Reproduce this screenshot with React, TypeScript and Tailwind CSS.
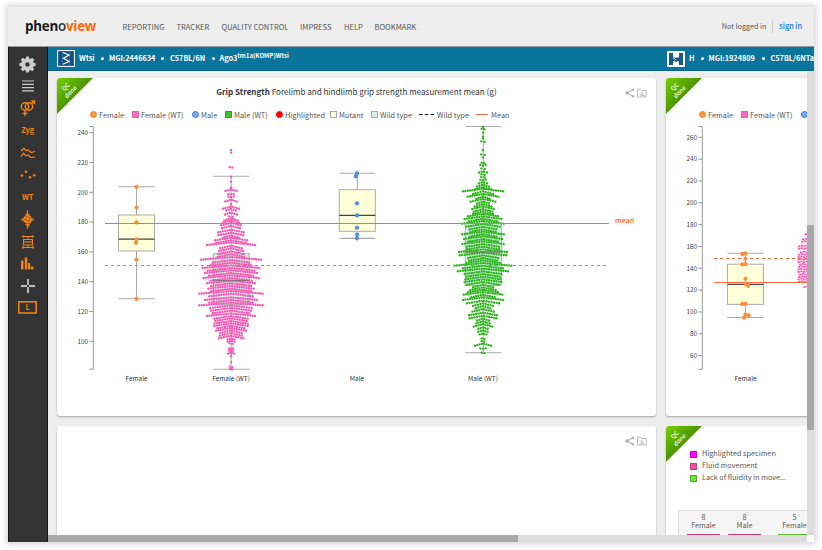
import type { ReactNode } from "react";

const SANS = "font-['Noto_Sans_CJK_SC',sans-serif]";

type Row = [number, number];

// Beeswarm rows: offset down the plot and half width, both in thirds of a pixel.
const femaleRows: Row[] = [
  [90, 0], [98, 0], [141, 4], [170, 0], [185, 0], [203, 0], [209, 17], [222, 8], [230, 8], [240, 17], [252, 0], [260, 24],
  [268, 14], [279, 18], [289, 5], [296, 20], [302, 24], [309, 29], [318, 27], [330, 38], [339, 37], [347, 25], [354, 48],
  [362, 44], [368, 72], [378, 33], [386, 36], [395, 38], [404, 40], [412, 90], [421, 55], [429, 60], [437, 85], [445, 70],
  [452, 78], [460, 66], [467, 83], [475, 62], [483, 72], [491, 60], [499, 68], [507, 60], [514, 95], [522, 65], [533, 78],
  [541, 65], [549, 95], [557, 62], [565, 60], [573, 55], [581, 72], [589, 50], [596, 47], [604, 50], [611, 50], [618, 40],
  [625, 45], [632, 32], [640, 33], [648, 36], [656, 10], [663, 10], [670, 4], [685, 6], [692, 6], [699, 9], [708, 0],
  [726, 0], [740, 4], [747, 3],
];
const maleRows: Row[] = [
  [20, 0], [26, 4], [38, 0], [50, 0], [55, 0], [64, 5], [90, 0], [103, 5], [112, 0], [128, 4], [135, 8], [145, 5], [155, 12],
  [163, 5], [171, 5], [179, 8], [187, 12], [195, 18], [202, 25], [207, 60], [215, 30], [223, 46], [231, 20], [238, 37],
  [246, 18], [253, 25], [260, 32], [268, 28], [275, 30], [282, 45], [290, 55], [297, 42], [304, 62], [313, 50], [321, 40],
  [329, 38], [336, 62], [343, 40], [350, 57], [358, 45], [365, 62], [373, 48], [381, 48], [389, 72], [399, 70],
  [407, 45], [415, 42], [422, 50], [430, 85], [438, 60], [447, 75], [455, 55], [463, 50], [471, 52], [479, 55], [487, 48],
  [495, 30], [503, 38], [510, 45], [517, 58], [525, 35], [533, 60], [543, 48], [551, 30], [559, 22], [568, 32], [579, 42],
  [588, 40], [597, 18], [605, 20], [613, 28], [623, 14], [632, 14], [641, 10], [655, 4], [663, 4], [671, 24], [685, 8],
  [698, 4],
];

function Swarm({ rows, cx, color }: { rows: Row[]; cx: number; color: string }) {
  const dots: ReactNode[] = [];
  rows.forEach(([zy, zw], r) => {
    const w = zw / 3;
    const step = 2.4;
    const n = zw === 0 ? 1 : Math.max(2, Math.round((2 * w) / step) + 1);
    for (let i = 0; i < n; i++) {
      const x = n === 1 ? 0 : -w + (2 * w * i) / (n - 1);
      const lift = n < 4 ? 0.5 * (i % 2) : (Math.abs(x) / Math.max(w, 1)) * Math.min(2.6, w * 0.3) - 0.3;
      dots.push(<circle key={`${r}-${i}`} cx={cx + x} cy={120 + zy / 3 + lift} r="1.2" fill={color} />);
    }
  });
  return <g>{dots}</g>;
}

function Box({ x, top, q3, med, q1, low, wt = false }: { x: number; top: number; q3: number; med: number; q1: number; low: number; wt?: boolean }) {
  return (
    <g stroke="#aaaaaa" strokeWidth="1">
      <path d={`M${x} ${top}V${q3}M${x} ${q1}V${low}`} fill="none" />
      <path d={`M${x - 18} ${top}h36M${x - 18} ${low}h36`} fill="none" strokeWidth="1.1" />
      <rect x={x - 18} y={q3} width="36" height={q1 - q3} fill={wt ? "#d5f5ea" : "#ffffda"} />
      <path d={`M${x - 18} ${med}h36`} stroke={wt ? "#777" : "#444"} strokeWidth="1.3" />
    </g>
  );
}

function Axis({ x, first, step, labels }: { x: number; first: number; step: number; labels: number[] }) {
  return (
    <g>
      <path d={`M${x - 4} 126.5H${x}V369.2H${x - 4}`} fill="none" stroke="#999" />
      {labels.map((l, i) => (
        <g key={l}>
          <path d={`M${x - 4} ${first + i * step}h4`} stroke="#999" />
          <text x={x - 5.3} y={first + i * step + 2.3} textAnchor="end" fontSize="6.3" fill="#444">{l}</text>
        </g>
      ))}
    </g>
  );
}

function Label({ x, children }: { x: number; children: ReactNode }) {
  return <text x={x} y="381.4" textAnchor="middle" fontSize="6.5" fill="#333">{children}</text>;
}

function Points({ at, blue = false }: { at: Row[]; blue?: boolean }) {
  return (
    <g fill={blue ? "#5b9bf0" : "#ff9632"} stroke={blue ? "#3b77dd" : "#f97c35"} strokeWidth="0.8">
      {at.map(([x, y], i) => <circle key={i} cx={x} cy={y} r="1.7" />)}
    </g>
  );
}

function LegendItem({ kind, color = "", border = "", w, children }: { kind: "dot" | "square" | "dash" | "line"; color?: string; border?: string; w: string; children: ReactNode }) {
  return (
    <div className={`flex shrink-0 items-center whitespace-nowrap ${w}`}>
      {kind === "dot" && <span className={`mr-[2px] size-[7px] rounded-full border ${color} ${border}`} />}
      {kind === "square" && <span className={`mr-[2px] size-[7px] border ${color} ${border}`} />}
      {kind === "dash" && (
        <svg className="mr-[3px]" width="15" height="3"><path d="M0 1.5h15" stroke="#000" strokeWidth="1.2" strokeDasharray="3.6 2.2" /></svg>
      )}
      {kind === "line" && <span className="mr-[3px] h-px w-[12px] bg-[#ff7040]" />}
      {children}
    </div>
  );
}

function CardIcons() {
  return (
    <svg width="22" height="10" viewBox="0 0 22 10" className="absolute top-[10px] right-[9px]" fill="none" stroke="#b4b4b4">
      <path d="M8 1.7L2 5l6 3.3" strokeWidth="1.1" />
      <circle cx="8" cy="1.8" r="1.2" fill="#b4b4b4" stroke="none" />
      <circle cx="2" cy="5" r="1.7" fill="#b4b4b4" stroke="none" />
      <circle cx="8" cy="8.2" r="1.2" fill="#b4b4b4" stroke="none" />
      <path d="M12.5 9V1.2h3.2l.8 1.3h4.7V9zM14.7 7.7h4.6M17 3.6v3M15.7 5.4L17 6.8l1.3-1.4" strokeWidth=".9" />
    </svg>
  );
}

function QcRibbon() {
  return (
    <div className="absolute top-0 left-0 size-[36px] overflow-hidden rounded-tl-[3px] bg-linear-to-br from-[#75d000] to-[#438b00] to-60% [clip-path:polygon(0_0,100%_0,0_100%)]">
      <div className="absolute top-[4px] left-[-1px] w-[24px] rotate-[-45deg] text-center text-[6px] leading-[7px] font-medium text-white">
        <div>QC</div>
        <div>done</div>
      </div>
    </div>
  );
}

function Card({ className, children }: { className: string; children?: ReactNode }) {
  return <section className={`relative shrink-0 overflow-hidden rounded-[3px] bg-white shadow-[0_1px_2px_rgba(0,0,0,0.32)] ${className}`}>{children}</section>;
}

function Bullet() {
  return <span className="size-[3px] shrink-0 rounded-full bg-white" />;
}

function Gear() {
  return (
    <svg width="17" height="17" viewBox="-8.5 -8.5 17 17">
      {[0, 45, 90, 135, 180, 225, 270, 315].map((a) => (
        <path key={a} d="M-2 -5L-1.4 -8.1H1.4L2 -5z" fill="#ccc" transform={`rotate(${a})`} />
      ))}
      <circle r="4.2" fill="none" stroke="#ccc" strokeWidth="4" />
    </svg>
  );
}

function SideIcons() {
  const o = "#f78410";
  const cell = "flex h-[22.2px] shrink-0 items-center justify-center";
  return (
    <>
      <div className={cell}><Gear /></div>
      <div className={cell}><svg width="12" height="12"><path d="M0 1h12M0 4.3h12M0 7.6h12M0 10.9h12" stroke="#ccc" strokeWidth="1.2" /></svg></div>
      <div className={cell}>
        <svg width="16" height="17" viewBox="0 0 16 17" fill="none" stroke={o} strokeWidth="1.4">
          <circle cx="5" cy="6.5" r="3.7" /><circle cx="9" cy="6.5" r="3.7" />
          <path d="M5 10.2V16M2.5 13.4h5M11.7 3.8L14.5 1M11.3 1h3.3v3.3" />
        </svg>
      </div>
      <div className={`${cell} pb-[2px] text-[7.4px] font-bold text-[#f78410]`}>Zyg</div>
      <div className={cell}>
        <svg width="16" height="12" viewBox="0 0 16 12" fill="none" stroke={o} strokeWidth="1.2">
          <path d="M1 4L4 1.2L6 3.5L8 3L11 5.5L15 4.5M1 9.5L3.5 6.2L6 8.7L8 8L11 10.5L15 10" />
        </svg>
      </div>
      <div className={cell}>
        <svg width="16" height="10" fill={o}><circle cx="2" cy="5.5" r="1.3" /><circle cx="6" cy="1.7" r="1.3" /><circle cx="10" cy="7.3" r="1.3" /><circle cx="14.2" cy="5.3" r="1.3" /></svg>
      </div>
      <div className={`${cell} pb-[2px] text-[7.6px] font-bold text-[#f78410]`}>WT</div>
      <div className={cell}>
        <svg width="13" height="19" viewBox="-6.5 -9.5 13 19" stroke={o} strokeWidth="1.3">
          <path d="M-5.6 -.8V1M-4.2 -1.7V2M-2.8 -3.2V3.2M-1.4 -6V6M0 -9V9.2M1.4 -5.5V7M2.8 -3.8V4M4.2 -1.8V2M5.6 -.8V1" strokeDasharray="3 .3" />
        </svg>
      </div>
      <div className={cell}>
        <svg width="12" height="14" viewBox="0 0 12 14" fill="none" stroke={o} strokeWidth="1">
          <path d="M.5 1.5h11M.5 12.5h11M6 1.5v2M6 10.5v2M1 0v3M11 0v3M1 11v3M11 11v3M2 7h8" /><rect x="1.5" y="4.5" width="9" height="5.5" />
        </svg>
      </div>
      <div className={cell}>
        <svg width="13" height="13" fill={o}><rect y="3.5" width="2.4" height="9" /><rect x="3.8" y=".5" width="2.4" height="12" /><rect x="7" y="6" width="2.2" height="6.5" /><rect x="10" y="9.5" width="2.4" height="3" /></svg>
      </div>
      <div className={cell}><svg width="14" height="14"><path d="M0 7h6M8 7h6M7 0v6M7 8v6" stroke="#eee" strokeWidth="1.4" /></svg></div>
      <div className={`${cell} pb-px`}>
        <svg width="19" height="13" viewBox="0 0 19 13">
          <rect x=".8" y=".8" width="17.4" height="11.2" fill="none" stroke={o} strokeWidth="1.5" />
          <text x="9.5" y="8.9" textAnchor="middle" fontSize="7" fontWeight="700" fill={o}>L</text>
        </svg>
      </div>
    </>
  );
}

const nav: [string, string][] = [
  ["REPORTING", "w-[54px]"], ["TRACKER", "w-[45px]"], ["QUALITY CONTROL", "w-[78.5px]"],
  ["IMPRESS", "w-[44px]"], ["HELP", "w-[30.5px]"], ["BOOKMARK", "w-[50px]"],
];

export default function App() {
  return (
    <div className={`h-[550px] w-[822px] overflow-hidden bg-white pt-[7px] pl-[8px] text-[#555] ${SANS}`}>
      <div className="flex h-[535px] w-[806px] flex-col bg-[#eeeeee] shadow-[0_0_6px_2px_rgba(0,0,0,0.17)]">
        <header className="flex h-[40px] shrink-0 items-center border-b border-[#999] text-[7.6px]">
          <div className="w-[114.5px] shrink-0 pl-[17px] font-['Open_Sans',sans-serif] text-[13.4px] leading-none font-bold tracking-[-0.24px]">
            <span className="text-[#171717]">phen</span><span className="font-semibold text-[#333]">o</span><span className="text-[#f96b08]">view</span>
          </div>
          <nav className="flex flex-1">
            {nav.map(([label, w]) => <a key={label} className={`shrink-0 whitespace-nowrap ${w}`}>{label}</a>)}
          </nav>
          <span className="mr-[6px] text-[7.2px] whitespace-nowrap">Not logged in</span>
          <span className="h-[13px] w-px bg-[#ccc]" />
          <a className="mr-[12px] ml-[6px] text-[7.3px] font-medium whitespace-nowrap text-[#1476f2]">sign in</a>
        </header>
        <div className="flex min-h-0 flex-1">
          <aside className="flex w-[39.5px] shrink-0 flex-col border-x border-[#171717] bg-[#333] pt-[6px]"><SideIcons /></aside>
          <main className="flex min-w-0 flex-1 flex-col">
            <div className="flex h-[24px] shrink-0 items-center overflow-hidden border-b border-[#0a6488] bg-[#0a759c] text-[7.3px] font-bold text-white">
              <div className="flex w-[610px] shrink-0 items-center pl-[9px] whitespace-nowrap">
                <svg width="18" height="17" viewBox="0 0 18 17" className="mr-[4.5px] shrink-0">
                  <rect x=".6" y=".6" width="16.8" height="15.8" fill="#184f82" stroke="#fff" strokeWidth="1" />
                  <path d="M5.5 1v15M12.5 1v15" stroke="#356f9f" />
                  <path d="M6 2.5L12 5L6.5 8.2L12 11.5L6 14.3" fill="none" stroke="#fff" strokeWidth="1.2" />
                </svg>
                <span className="w-[22px]">Wtsi</span><Bullet />
                <span className="ml-[5px] w-[52px]">MGI:2446634</span><Bullet />
                <span className="ml-[6px] w-[41.5px]">C57BL/6N</span><Bullet />
                <span className="ml-[5px]">Ago3</span><span className="relative top-[-2.5px] text-[6.15px]">tm1a(KOMP)Wtsi</span>
              </div>
              <div className="flex shrink-0 items-center pl-[9px] whitespace-nowrap">
                <svg width="18" height="16" viewBox="0 0 18 16" className="mr-[4.5px] shrink-0">
                  <rect width="18" height="16" fill="#fff" />
                  <path d="M2 2h4v4.2c2 .3 3.5 .8 6 0V2h4v12h-4v-3.7c-2 .5-4 .3-6-.3V14H2z" fill="#155b88" />
                  <path d="M6 7.2l2 .5M7.5 9.5l1-1.2" stroke="#fff" strokeWidth=".8" />
                </svg>
                <span className="w-[11.5px]">H</span><Bullet />
                <span className="ml-[5px] w-[53px]">MGI:1924809</span><Bullet />
                <span className="ml-[6px]">C57BL/6NTa</span>
              </div>
            </div>
            <div className="flex min-h-0 flex-1">
              <div className="flex min-w-0 flex-1 flex-col">
                <div className="flex min-h-0 flex-1 flex-col gap-[10px] overflow-hidden pt-[7px] pl-[9.5px]">
                  <div className="flex gap-[10px]">
                    <Card className="h-[338px] w-[599px]">
                      <QcRibbon /><CardIcons />
                      <h2 className="h-[28px] pt-[8px] text-center text-[8.07px] leading-[12px] text-[#333]"><b>Grip Strength</b> Forelimb and hindlimb grip strength measurement mean (g)</h2>
                      <div className="flex h-[17px] items-center pl-[33px] text-[7.35px] leading-none">
                        <LegendItem kind="dot" color="bg-[#ff9b36]" border="border-[#f37834]" w="w-[42px]">Female</LegendItem>
                        <LegendItem kind="square" color="bg-[#ff69c0]" border="border-[#ee5cad]" w="w-[60px]">Female (WT)</LegendItem>
                        <LegendItem kind="dot" color="bg-[#75aef2]" border="border-[#3d71d6]" w="w-[33px]">Male</LegendItem>
                        <LegendItem kind="square" color="bg-[#3fc12d]" border="border-[#2aaa20]" w="w-[51px]">Male (WT)</LegendItem>
                        <LegendItem kind="dot" color="bg-[#ff0000]" border="border-[#ff0000]" w="w-[54px]">Highlighted</LegendItem>
                        <LegendItem kind="square" color="bg-[#ffffda]" border="border-[#aaa]" w="w-[41px]">Mutant</LegendItem>
                        <LegendItem kind="square" color="bg-[#d5f5ea]" border="border-[#aaa]" w="w-[48px]">Wild type</LegendItem>
                        <LegendItem kind="dash" w="w-[57px]">Wild type</LegendItem>
                        <LegendItem kind="line" w="w-[50px]">Mean</LegendItem>
                      </div>
                      <svg width="599" height="270" viewBox="57 123 599 270">
                        <Axis x={93.3} first={132.7} step={29.8} labels={[240, 220, 200, 180, 160, 140, 120, 100]} />
                        <Box x={136.5} top={186.7} q3={215} med={239.2} q1={251} low={298.8} />
                        <Box x={231.2} top={176.2} q3={253.8} med={280.5} q1={304.7} low={369.2} wt />
                        <Box x={357.3} top={173.2} q3={189.7} med={215.4} q1={231.3} low={238.4} />
                        <Box x={483.3} top={126.5} q3={223.5} med={252} q1={285.4} low={352.8} wt />
                        <Swarm rows={femaleRows} cx={231} color="#f55cb5" />
                        <Swarm rows={maleRows} cx={483} color="#32b520" />
                        <path d="M213 280.5h36M465 252h36" stroke="#777" strokeOpacity=".65" />
                        <Points at={[[136.5, 186.9], [136.5, 207.4], [136.5, 222.3], [136.5, 239.3], [136, 242.7], [136.5, 259.7], [136.5, 298.8]]} />
                        <Points blue at={[[357, 173.3], [355.8, 176.3], [357, 203.4], [357, 215.4], [357, 227.7], [357, 234.6], [357, 238.3]]} />
                        <path d="M105 223.5H609" stroke="#ff6a42" />
                        <path d="M105 265.5H606" stroke="#ff6a42" strokeDasharray="3 3" />
                        <text x="615" y="222.8" fontSize="7.2" fontWeight="500" fill="#ff6030">mean</text>
                        <Label x={136.5}>Female</Label><Label x={231}>Female (WT)</Label><Label x={357}>Male</Label><Label x={483}>Male (WT)</Label>
                      </svg>
                    </Card>
                    <Card className="h-[338px] w-[599px]">
                      <QcRibbon />
                      <div className="mt-[28px] flex h-[17px] items-center pl-[33px] text-[7.35px] leading-none">
                        <LegendItem kind="dot" color="bg-[#ff9b36]" border="border-[#f37834]" w="w-[42px]">Female</LegendItem>
                        <LegendItem kind="square" color="bg-[#ff69c0]" border="border-[#ee5cad]" w="w-[60px]">Female (WT)</LegendItem>
                        <span className="size-[7px] rounded-full border border-[#3d71d6] bg-[#75aef2]" />
                      </div>
                      <svg width="141" height="270" viewBox="666 123 141 270">
                        <Axis x={702.3} first={137.3} step={21.83} labels={[260, 240, 220, 200, 180, 160, 140, 120, 100, 80, 60]} />
                        <Box x={745.4} top={253.3} q3={264.2} med={284.3} q1={304.4} low={317.5} />
                        <path d="M714 258.5H807" stroke="#ff6a42" strokeDasharray="3 3" />
                        <g fill="#f55cb5">
                          {[[234, 804.5], [239, 802], [241.5, 801], [246, 798], [248.5, 798], [252, 800], [254.3, 798], [256.8, 797.5], [259.3, 797.5], [261.8, 797.5], [264.2, 799], [266.7, 798], [269.2, 797.5], [271.7, 797.5], [274.2, 799], [276.6, 798], [279, 797.5], [281.5, 798], [286.8, 803.5]].map(([y, x]) =>
                            [0, 1, 2, 3].map((i) => <rect key={`${y}-${i}`} x={x + i * 2.7} y={y - 0.6 - (i % 2) * 0.6} width="2.3" height="1.8" />),
                          )}
                        </g>
                        <path d="M714 282.5H807" stroke="#ff6a42" />
                        <Points at={[[742.3, 254], [745.5, 253.3], [745.5, 258.7], [742.3, 264.4], [745.5, 264.1], [745.5, 278.8], [745.3, 283.8], [748.2, 285.7], [742.2, 304], [745.5, 303.8], [745.5, 314.7], [748.7, 315.4], [744, 317.6]]} />
                        <Label x={745.5}>Female</Label>
                      </svg>
                    </Card>
                  </div>
                  <div className="flex gap-[10px]">
                    <Card className="h-[338px] w-[599px]"><CardIcons /></Card>
                    <Card className="h-[338px] w-[599px] pt-[22px]">
                      <QcRibbon />
                      {[["Highlighted specimen", "bg-[#ff00ff] border-[#dd00dd]"], ["Fluid movement", "bg-[#eb5691] border-[#c43d78]"], ["Lack of fluidity in move...", "bg-[#6fe03c] border-[#4cb52a]"]].map(([t, c]) => (
                        <div key={t} className="flex h-[12px] items-center pl-[24px] text-[7.25px] leading-none"><span className={`mr-[5px] size-[7px] border ${c}`} />{t}</div>
                      ))}
                      <div className="mt-[26px] ml-[12px] flex h-[60px] w-[500px] border border-[#ddd] bg-[#f5f5f5] pt-px pl-[8px] text-center text-[7.2px] leading-[8px]">
                        <div className="mr-[8px] h-[23px] w-[33px] border-b border-[#c33d78] pt-px">8<br />Female</div>
                        <div className="mr-[17px] h-[23px] w-[33px] border-b border-[#c33d78] pt-px">8<br />Male</div>
                        <div className="h-[23px] w-[33px] border-b border-[#59ba32] pt-px">5<br />Female</div>
                      </div>
                    </Card>
                  </div>
                </div>
                <div className="h-[7px] shrink-0 bg-[#ddd]"><div className="h-full w-[470.5px] bg-[#a9a9a9]" /></div>
              </div>
              <div className="flex w-[7px] shrink-0 flex-col bg-[#ddd] pt-[154px]">
                <div className="h-[205px] bg-[#a9a9a9]" />
                <div className="mt-auto h-[7px] bg-white" />
              </div>
            </div>
          </main>
        </div>
      </div>
    </div>
  );
}
